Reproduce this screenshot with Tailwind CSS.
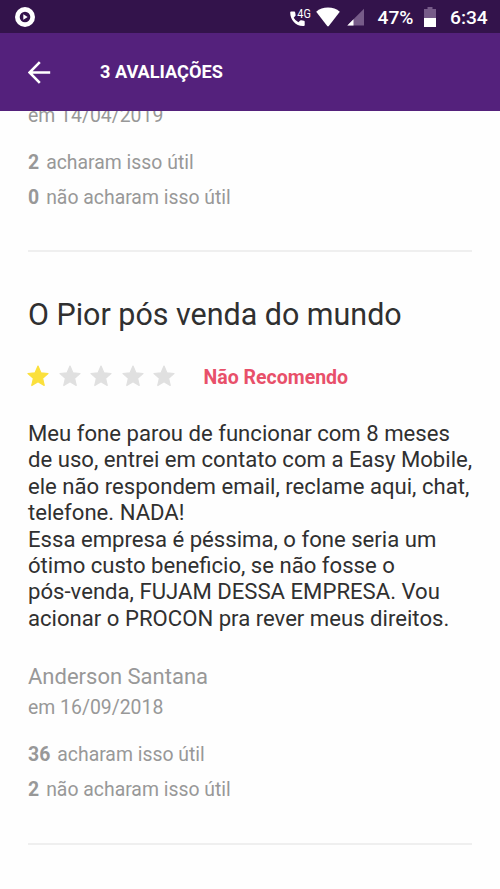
<!DOCTYPE html>
<html lang="pt-BR">
<head>
<meta charset="utf-8">
<meta name="viewport" content="width=device-width, initial-scale=1">
<title>Avaliações</title>
<script src="https://cdn.jsdelivr.net/npm/@tailwindcss/browser@4"></script>
</head>
<body class="bg-[#fefefe]">
<svg class="hidden"><symbol id="star" viewBox="0 0 22 22"><path d="M11 1 13.900 7.800l7.100.7-5.400 4.800 1.600 7.200L11 16.700l-6.200 3.800 1.600-7.200L1 8.500l7.100-.7z" fill="currentColor" stroke="currentColor" stroke-width="1.200" stroke-linejoin="round"/></symbol></svg>
<div class="flex h-[889px] w-[500px] flex-col overflow-hidden font-[Roboto,sans-serif] text-[#989898]">
  <!-- Status bar -->
  <div class="flex h-[33px] shrink-0 items-center bg-[#33134b] pl-[15px] text-white">
    <svg class="size-5" viewBox="0 0 20 20"><circle cx="10" cy="10" r="10" fill="#fff"/><circle cx="10" cy="10" r="5.300" fill="#33134b"/><path d="M8.300 7.200v5.600l4.400-2.800z" fill="#fff"/></svg>
    <svg class="ml-[254px] h-[22px] w-[23px]" viewBox="0 0 23 22"><path d="M2.200 5.500h3q.9 0 1 .9l.4 2.500q.1.700-.4 1.200l-1.500 1.600q1.700 3.100 4.700 4.600l1.800-1.700q.5-.5 1.100-.3l2.600.5q.8.200.8 1v3.100q0 1-1 1C7.200 20.400 1.200 14.300 1.200 6.500q0-1 1-1z" fill="#fff"/><text x="8.300" y="12" font-size="12.500" textLength="13.500" lengthAdjust="spacingAndGlyphs" fill="#fff">4G</text></svg>
    <svg class="ml-[4px] h-[20px] w-6" viewBox="0 0 24 20"><path d="M.2 4.700Q5 .6 12 .6t11.800 4.100L12.800 19q-.8.900-1.600 0z" fill="#fff"/></svg>
    <svg class="ml-[7px] h-[18px] w-[18px]" viewBox="0 0 18 18"><path d="M17 .7V17.500H.3z" fill="#775b89"/><path d="M6.500 11.300v6.200H.3z" fill="#fff"/></svg>
    <span class="ml-[12.500px] mt-[3px] w-[36.500px] whitespace-nowrap text-[19.200px] font-medium leading-none">47%</span>
    <svg class="ml-[10px] h-[20px] w-[12px]" viewBox="0 0 12 20"><path d="M3.500 0h5v2H12v9H0V2h3.500z" fill="#775b89"/><path d="M0 11h12v9H0z" fill="#fff"/></svg>
    <span class="ml-[14px] mt-[2px] whitespace-nowrap text-[19.200px] font-medium leading-none">6:34</span>
  </div>
  <!-- App bar -->
  <header class="flex h-[78px] shrink-0 items-center bg-[#54217c] pl-[28px] text-white">
    <svg class="size-[23px]" viewBox="0 0 23 23" fill="none" stroke="#fff" stroke-width="2.600"><path d="M22.200 11.500H2M11.800 1.200 1.500 11.500l10.300 10.300"/></svg>
    <h1 class="ml-[49px] whitespace-nowrap text-[18.150px] font-bold leading-none">3 AVALIAÇÕES</h1>
  </header>
  <main class="min-h-0 flex-1 overflow-hidden px-[28px]">
    <article class="-mt-[13px] h-[154px] border-b-2 border-[#efefef] text-[19.400px] leading-[35px]">
      <p>em 14/04/2019</p>
      <p class="mt-[12px]"><b class="mr-[7px]">2</b>acharam isso útil</p>
      <p><b class="mr-[7px]">0</b>não acharam isso útil</p>
    </article>
    <article class="h-[593px] border-b-2 border-[#efefef] pt-[42px] text-[19.400px] leading-[35px]">
      <h2 class="whitespace-nowrap text-[30.450px] leading-[42px] text-[#303030]">O Pior pós venda do mundo</h2>
      <div class="mt-[22px] flex h-[36px] items-center">
        <div class="-ml-[1px] flex gap-[9.500px] text-[#e0e0e0]">
          <svg class="size-[22px] text-[#fbe03c]"><use href="#star"/></svg>
          <svg class="size-[22px]"><use href="#star"/></svg>
          <svg class="size-[22px]"><use href="#star"/></svg>
          <svg class="size-[22px]"><use href="#star"/></svg>
          <svg class="size-[22px]"><use href="#star"/></svg>
        </div>
        <strong class="ml-[28.500px] mt-[3px] whitespace-nowrap text-[19.500px] font-bold text-[#e8506a]">Não Recomendo</strong>
      </div>
      <p class="mt-[26px] whitespace-nowrap text-[22.130px] leading-[26.400px] text-[#303030]">Meu fone parou de funcionar com 8 meses<br>de uso, entrei em contato com a Easy Mobile,<br>ele não respondem email, reclame aqui, chat,<br>telefone. NADA!<br>Essa empresa é péssima, o fone seria um<br>ótimo custo beneficio, se não fosse o<br>pós-venda, FUJAM DESSA EMPRESA. Vou<br>acionar o PROCON pra rever meus direitos.</p>
      <p class="mt-[28px] text-[22px]">Anderson Santana</p>
      <p class="-mt-[4px]">em 16/09/2018</p>
      <p class="mt-[12px]"><b class="mr-[7px]">36</b>acharam isso útil</p>
      <p><b class="mr-[7px]">2</b>não acharam isso útil</p>
    </article>
  </main>
</div>
</body>
</html>
